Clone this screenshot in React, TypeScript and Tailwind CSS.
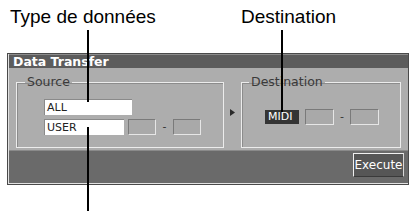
const lcd = "font-['DejaVu_Sans',sans-serif]";

const Sunken = ({ w, h }: { w: string; h: string }) => (
  <div className={`${w} ${h} bg-[#a9a9a9] border border-t-[#7a7a7a] border-l-[#7a7a7a] border-r-[#e6e6e6] border-b-[#e6e6e6]`} />
);

const App = () => {
  return (
    <div className="relative w-[412px] h-[218px] bg-white overflow-hidden">
      {/* callout labels */}
      <div className="flex h-[53px] pt-[6px] text-[19px] leading-[22px] text-black font-['Liberation_Sans',Arial,sans-serif]">
        <span className="w-[231px] pl-[10px]">Type de données</span>
        <span className="pl-[10px]">Destination</span>
      </div>

      {/* window */}
      <div className={`ml-[7px] w-[402px] border border-[#4a4a4a] bg-[#4a4a4a] ${lcd}`}>
        <div className="border-l border-b border-[#e2e2e2]">
          <div className="h-[14px] bg-[#5c5c5c] border-t border-[#8c8c8c] pl-[4px] text-[12.5px] leading-[13px] font-bold text-white">
            Data Transfer
          </div>

          <div className="flex h-[82px] bg-[#adadad] pt-[8px] pb-[2px] pl-[7px]">
            <fieldset className="w-[208px] border border-[#ececec] shadow-[inset_1px_1px_0_#8c8c8c]">
              <legend className="ml-[8px] px-[2px] text-[12.5px] leading-[12px] text-[#3a3a3a]">Source</legend>
              <div className="flex flex-col gap-[4px] pl-[27px] pt-[11px]">
                <div className="w-[88px] h-[16px] bg-white border-t border-l border-[#8a8a8a] pl-[2px] text-[11px] leading-[15px] text-[#222]">
                  ALL
                </div>
                <div className="flex items-center">
                  <div className="w-[80px] h-[16px] bg-white border-t border-l border-[#8a8a8a] pl-[2px] text-[11px] leading-[15px] text-[#222]">
                    USER
                  </div>
                  <div className="ml-[4px]">
                    <Sunken w="w-[28px]" h="h-[16px]" />
                  </div>
                  <span className="w-[17px] text-center text-[11px] leading-[16px] text-[#333]">-</span>
                  <Sunken w="w-[28px]" h="h-[16px]" />
                </div>
              </div>
            </fieldset>

            <div className="flex w-[17px] justify-center pt-[33px]">
              <svg width="5" height="7" viewBox="0 0 5 7">
                <path d="M0 0 L5 3.5 L0 7 Z" fill="#2a2a2a" />
              </svg>
            </div>

            <fieldset className="w-[160px] border border-[#ececec] shadow-[inset_1px_1px_0_#8c8c8c]">
              <legend className="ml-[7px] px-[2px] text-[12.5px] leading-[12px] text-[#3a3a3a]">Destination</legend>
              <div className="flex items-center pl-[23px] pt-[21px]">
                <div className="w-[34px] h-[14px] bg-[#343434] pl-[3px] text-[11px] leading-[14px] text-white">MIDI</div>
                <div className="ml-[6px]">
                  <Sunken w="w-[29px]" h="h-[16px]" />
                </div>
                <span className="w-[16px] text-center text-[11px] leading-[16px] text-[#333]">-</span>
                <Sunken w="w-[29px]" h="h-[16px]" />
              </div>
            </fieldset>
          </div>

          <div className="flex h-[33px] justify-end bg-[#6a6a6a] border-t border-[#8a8a8a] pt-[2px] pr-[4px]">
            <button className="w-[51px] h-[24px] bg-[#565656] border border-t-[#f0f0f0] border-l-[#f0f0f0] border-r-[#d8d8d8] border-b-[#3a3a3a] text-[12px] leading-[20px] text-white">
              Execute
            </button>
          </div>
        </div>
      </div>

      {/* callout leader lines */}
      <div className="absolute left-[87px] top-[30px] w-[2px] h-[72px] bg-black" />
      <div className="absolute left-[87px] top-[127px] w-[2px] h-[84px] bg-black" />
      <div className="absolute left-[281px] top-[30px] w-[2px] h-[82px] bg-black" />
    </div>
  );
};

export default App;
